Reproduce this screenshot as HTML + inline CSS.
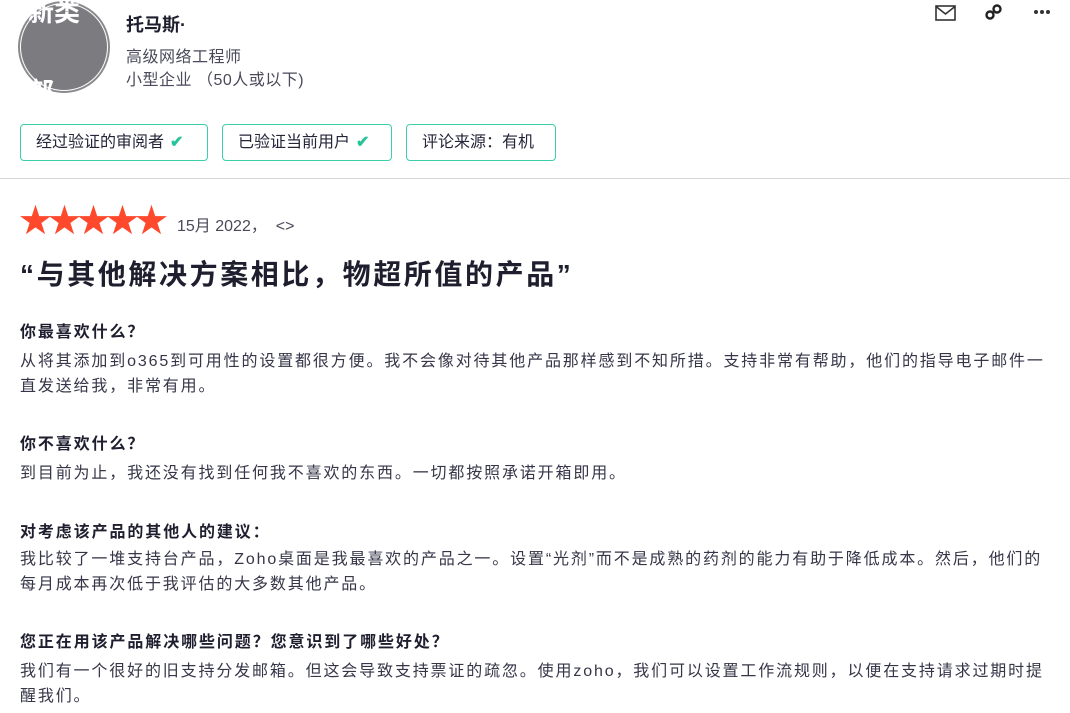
<!DOCTYPE html>
<html><head><meta charset="utf-8"><style>
body{margin:0;width:1070px;height:713px;overflow:hidden;background:#fff;font-family:"Liberation Sans","Noto Sans CJK SC",sans-serif;color:#25253a;position:relative}
.a{position:absolute}
.tag{position:absolute;top:124px;height:37px;border:1px solid #3ccfac;border-radius:4px;box-sizing:border-box;font-size:16px;line-height:35px;padding-left:15px;color:#25253a}
.ck{color:#27c49a;font-weight:bold;margin-left:6px}
h4{position:absolute;left:20px;margin:0;font-size:16px;font-weight:bold;color:#1e1e2e;letter-spacing:1.9px}
p{position:absolute;left:20px;margin:0;font-size:16px;line-height:25px;width:1050px;color:#363648;letter-spacing:1.85px;white-space:nowrap}
</style></head><body>
<div class="a" style="left:18px;top:1px;width:92px;height:92px;border-radius:50%;border:2px solid #8a8a8e;box-sizing:border-box;background:#fff"></div>
<div class="a" style="left:21px;top:4px;width:86px;height:86px;border-radius:50%;background:#7c7b80"></div>
<div class="a" style="left:28px;top:-8px;font-size:26px;font-weight:bold;color:#fff">新类</div>
<div class="a" style="left:28px;top:72px;font-size:26px;font-weight:bold;color:#fff;height:22px;overflow:hidden">部</div>
<div class="a" style="left:126px;top:11px;font-size:18px;font-weight:bold;color:#1e1e2e">托马斯·</div>
<div class="a" style="left:126px;top:43px;font-size:16px;color:#4a4a5a;letter-spacing:0.5px">高级网络工程师</div>
<div class="a" style="left:126px;top:66px;font-size:16px;color:#4a4a5a;letter-spacing:0.5px">小型企业 （50人或以下)</div>
<svg class="a" style="left:935px;top:5px" width="22" height="16" viewBox="0 0 22 16"><rect x="1" y="1" width="19" height="14" fill="none" stroke="#333" stroke-width="1.6"/><path d="M1 1.5L10.5 9L20 1.5" fill="none" stroke="#333" stroke-width="1.6"/></svg>
<svg class="a" style="left:984px;top:3px" width="20" height="18" viewBox="0 0 20 18"><circle cx="6" cy="12" r="3.5" fill="none" stroke="#222" stroke-width="2.4"/><circle cx="13" cy="6" r="3.5" fill="none" stroke="#222" stroke-width="2.4"/></svg>
<svg class="a" style="left:1033px;top:9px" width="18" height="6" viewBox="0 0 18 6"><circle cx="3" cy="3" r="2" fill="#333"/><circle cx="9" cy="3" r="2" fill="#333"/><circle cx="15" cy="3" r="2" fill="#333"/></svg>
<div class="a" style="left:19px;top:202px;font-size:33px;line-height:38px;color:#ff492c;letter-spacing:-4px">★★★★★</div>
<div class="tag" style="left:20px;width:188px">经过验证的审阅者<span class="ck">✔</span></div>
<div class="tag" style="left:222px;width:170px">已验证当前用户<span class="ck">✔</span></div>
<div class="tag" style="left:406px;width:150px">评论来源：有机</div>
<div class="a" style="left:0;top:178px;width:1070px;height:1px;background:#d8d8d8"></div>
<div class="a" style="left:177px;top:212px;font-size:16px;color:#4a4a5a">15月 2022， &nbsp;&lt;&gt;</div>
<div class="a" style="left:20px;top:253px;font-size:28px;font-weight:bold;color:#1e1e2e;letter-spacing:2.6px">“与其他解决方案相比，物超所值的产品”</div>
<h4 style="top:318px">你最喜欢什么？</h4>
<p style="top:349px">从将其添加到o365到可用性的设置都很方便。我不会像对待其他产品那样感到不知所措。支持非常有帮助，他们的指导电子邮件一<br>直发送给我，非常有用。</p>
<h4 style="top:430px">你不喜欢什么？</h4>
<p style="top:461px">到目前为止，我还没有找到任何我不喜欢的东西。一切都按照承诺开箱即用。</p>
<h4 style="top:518px">对考虑该产品的其他人的建议：</h4>
<p style="top:547px">我比较了一堆支持台产品，Zoho桌面是我最喜欢的产品之一。设置“光剂”而不是成熟的药剂的能力有助于降低成本。然后，他们的<br>每月成本再次低于我评估的大多数其他产品。</p>
<h4 style="top:628px">您正在用该产品解决哪些问题？您意识到了哪些好处？</h4>
<p style="top:659px">我们有一个很好的旧支持分发邮箱。但这会导致支持票证的疏忽。使用zoho，我们可以设置工作流规则，以便在支持请求过期时提<br>醒我们。</p>
</body></html>
